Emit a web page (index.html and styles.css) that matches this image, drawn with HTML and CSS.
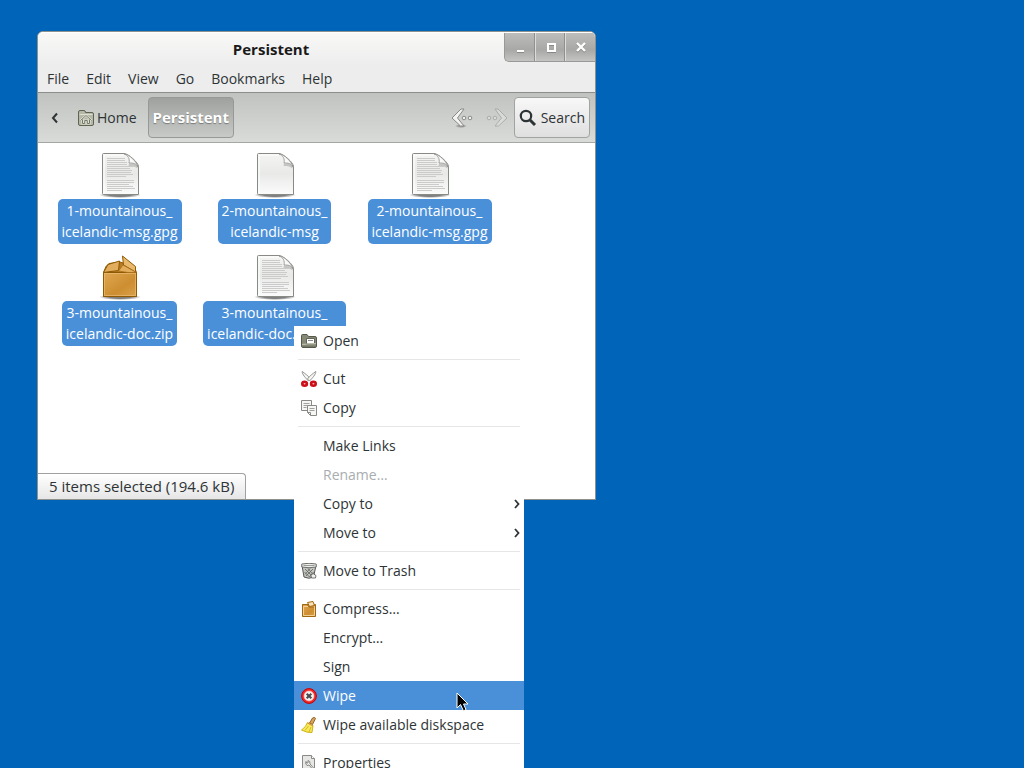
FILE: index.html
```html
<!DOCTYPE html>
<html lang="en">
<head>
    <meta charset="UTF-8">
    <meta name="viewport" content="width=device-width, initial-scale=1.0">
    <title>Persistent</title>
    <link rel="stylesheet" href="styles.css">
</head>
<body>
    <!-- Shared icon shapes -->
    <svg class="icon-defs" width="0" height="0" aria-hidden="true">
        <defs>
            <linearGradient id="paper" x1="0" y1="0" x2="0" y2="1">
                <stop offset="0" stop-color="#f4f4f3"/>
                <stop offset="0.5" stop-color="#e9eae8"/>
                <stop offset="1" stop-color="#fbfbfb"/>
            </linearGradient>
            <radialGradient id="shade">
                <stop offset="0.5" stop-color="#000" stop-opacity="0.5"/>
                <stop offset="1" stop-color="#000" stop-opacity="0"/>
            </radialGradient>
            <linearGradient id="carton" x1="0" y1="0" x2="1" y2="1">
                <stop offset="0" stop-color="#e0a751"/>
                <stop offset="0.6" stop-color="#cd8e31"/>
                <stop offset="1" stop-color="#d9a04a"/>
            </linearGradient>
            <linearGradient id="folder" x1="0" y1="0" x2="0" y2="1">
                <stop offset="0" stop-color="#a5a892"/>
                <stop offset="1" stop-color="#6c6f5f"/>
            </linearGradient>
            <symbol id="page" viewBox="0 0 48 48">
                <ellipse cx="24" cy="44" rx="21" ry="3" fill="url(#shade)"/>
                <path d="M7.500 2.500H28c4 0 14.500 9 14.500 13V43.500H7.500Q6.500 43.500 6.500 42.500V3.500Q6.500 2.500 7.500 2.500Z" fill="url(#paper)" stroke="#888a85"/>
                <path d="M8 42V4H28" fill="none" stroke="#fff"/>
                <path d="M28 3c4 1 6 5 5 9 4 0 7 0 9 4-1-5-9-13-14-13Z" fill="#fafafa" stroke="#8e908c" stroke-width="0.800"/>
                <path d="M33 12.500c3 0 6 0 8.500 2v3c-3-2.500-7-2.500-9-2.500Z" fill="#888a85" opacity="0.400"/>
            </symbol>
            <symbol id="text-page" viewBox="0 0 48 48">
                <use href="#page"/>
                <path d="M11 7.500h18M11 9.500h18M11 11.500h20M11 13.500h20M11 15.500h27M11 17.500h23M11 19.500h25M11 21.500h24M11 23.500h26M11 25.500h19M11 29.500h27M11 31.500h27M11 33.500h22M11 35.500h26M11 37.500h28M11 39.500h15" stroke="#cbccca"/>
            </symbol>
        </defs>
    </svg>

    <main class="desktop">
        <section class="window">
            <header class="titlebar">
                <h1 class="window-title">Persistent</h1>
                <div class="window-controls">
                    <button type="button" aria-label="Minimize">
                        <svg width="12" height="12" viewBox="0 0 12 12"><path d="M3 10h7" stroke="#fff" stroke-width="2"/></svg>
                    </button>
                    <button type="button" aria-label="Maximize">
                        <svg width="12" height="12" viewBox="0 0 12 12"><path d="M3 3h7v7H3z" fill="none" stroke="#fff" stroke-width="2"/></svg>
                    </button>
                    <button type="button" aria-label="Close">
                        <svg width="12" height="12" viewBox="0 0 12 12"><path d="M2 2l8 8M10 2l-8 8" stroke="#fff" stroke-width="2.400"/></svg>
                    </button>
                </div>
            </header>

            <nav class="menubar">
                <button type="button">File</button>
                <button type="button">Edit</button>
                <button type="button">View</button>
                <button type="button">Go</button>
                <button type="button">Bookmarks</button>
                <button type="button">Help</button>
            </nav>

            <div class="toolbar">
                <button type="button" class="path-scroll" aria-label="Scroll path">
                    <svg width="10" height="12" viewBox="0 0 10 12"><path d="M7 1.500L3 6l4 4.500" fill="none" stroke="#2e3436" stroke-width="2"/></svg>
                </button>
                <button type="button" class="path-button">
                    <svg width="16" height="16" viewBox="0 0 16 16">
                        <path d="M.5 14V2Q.5 .5 2 .5h4Q7.500 .5 7.500 2.500H14Q15.500 2.500 15.500 4v10Q15.500 15.500 14 15.500H2Q.5 15.500 .5 14Z" fill="#b5b8a5" stroke="#5f6354"/>
                        <path d="M1.500 4.500h13" stroke="#dddfd2"/>
                        <path d="M2.500 10.500L8 5.500l5.500 5M4.500 9.500v4h2.200v-3h2.600v3h2.200v-4" fill="none" stroke="#e6e8dc" stroke-width="2"/>
                        <path d="M2.500 10.500L8 5.500l5.500 5M4.500 9.500v4h2.200v-3h2.600v3h2.200v-4" fill="none" stroke="#74786a"/>
                    </svg>
                    Home
                </button>
                <button type="button" class="path-button path-current">Persistent</button>

                <div class="history">
                    <button type="button" aria-label="Back">
                        <svg width="24" height="24" viewBox="0 0 24 24">
                            <ellipse cx="11" cy="20" rx="6" ry="2" fill="url(#shade)" opacity="0.500"/>
                            <path d="M11 3h3L7.500 12l6.500 8h-3.500L2 12Z" fill="#f2f2f1" stroke="#888a85"/>
                            <circle cx="14" cy="12" r="1.800" fill="#f2f2f1" stroke="#888a85"/>
                            <circle cx="20" cy="12" r="1.800" fill="#f2f2f1" stroke="#888a85"/>
                        </svg>
                    </button>
                    <button type="button" aria-label="Forward" disabled>
                        <svg width="24" height="24" viewBox="0 0 24 24">
                            <path d="M13 3h-3l6.500 9-6.500 8h3.500L22 12Z" fill="#e6e7e5" stroke="#888a85"/>
                            <circle cx="10" cy="12" r="1.800" fill="#e6e7e5" stroke="#888a85"/>
                            <circle cx="4" cy="12" r="1.800" fill="#e6e7e5" stroke="#888a85"/>
                        </svg>
                    </button>
                </div>

                <button type="button" class="search-button">
                    <svg width="18" height="18" viewBox="0 0 18 18">
                        <circle cx="7" cy="7" r="5.200" fill="none" stroke="#2e3436" stroke-width="2.200"/>
                        <path d="M11 11l5 5" stroke="#2e3436" stroke-width="3"/>
                    </svg>
                    Search
                </button>
            </div>

            <ul class="files">
                <li class="file">
                    <svg width="48" height="48"><use href="#text-page"/></svg>
                    <span class="file-name">1-mountainous_<br>icelandic-msg.gpg</span>
                </li>
                <li class="file">
                    <svg width="48" height="48"><use href="#page"/></svg>
                    <span class="file-name">2-mountainous_<br>icelandic-msg</span>
                </li>
                <li class="file">
                    <svg width="48" height="48"><use href="#text-page"/></svg>
                    <span class="file-name">2-mountainous_<br>icelandic-msg.gpg</span>
                </li>
                <li class="file">
                    <svg width="48" height="48" viewBox="0 0 48 48">
                        <ellipse cx="24" cy="44" rx="21" ry="3" fill="url(#shade)"/>
                        <path d="M7.500 19.500L10 13.500L13 10.500L24 9L38 13.500L40.500 19.500V43.500H7.500Z" fill="#b57b27" stroke="#8f5902"/>
                        <path d="M7.500 19.500h33v24h-33Z" fill="url(#carton)" stroke="#8f5902"/>
                        <path d="M8.500 42.500v-22h31v22Z" fill="none" stroke="#eec27e" opacity="0.600"/>
                        <path d="M7.500 19.500l4.500-8L23.500 8l-1 9.500Z" fill="#e2ad5c" stroke="#8f5902"/>
                        <path d="M26.500 3L39.500 13.500V19L27.500 12Z" fill="#e9b96e" stroke="#8f5902"/>
                        <path d="M27 12L40.500 19.500H32L22.500 18Z" fill="#e2ad5c" stroke="#a66a10" stroke-width="0.700"/>
                    </svg>
                    <span class="file-name">3-mountainous_<br>icelandic-doc.zip</span>
                </li>
                <li class="file">
                    <svg width="48" height="48"><use href="#text-page"/></svg>
                    <span class="file-name">3-mountainous_<br>icelandic-doc.zip.gpg</span>
                </li>
            </ul>

            <footer class="statusbar">5 items selected (194.6 kB)</footer>
        </section>

        <div class="context-menu" role="menu">
            <button type="button" role="menuitem">
                <svg width="16" height="16" viewBox="0 0 16 16">
                    <path d="M.5 13V2.500Q.5 1.500 1.500 1.500H6l1.500 2H14q1.500 0 1.500 1.500v8q0 1.500-1.500 1.500H2Q.5 14.500.5 13Z" fill="#858975" stroke="#56594a"/>
                    <path d="M1.500 10.500h13v3.500h-13Z" fill="url(#folder)"/>
                    <path d="M5.500 5.500h8v5h-8Z" fill="#fff" stroke="#62655a"/>
                    <path d="M7 7.500h5" stroke="#888a85"/>
                    <path d="M1 11.500h4l1-1h9" fill="none" stroke="#b9bcaa"/>
                </svg>
                <span>Open</span>
            </button>
            <hr>
            <button type="button" role="menuitem">
                <svg width="16" height="16" viewBox="0 0 16 16">
                    <path d="M1.200 .5C.8 3 5 7.500 7.500 10L9.500 8C7.500 5 4 2.500 1.200 .5Z" fill="#f6f6f5" stroke="#888a85" stroke-width="0.900"/>
                    <path d="M14.800 .5C15.200 3 11 7.500 8.500 10L6.500 8C8.500 5 12 2.500 14.800 .5Z" fill="#f6f6f5" stroke="#888a85" stroke-width="0.900"/>
                    <ellipse cx="3.600" cy="12.700" rx="2.300" ry="2" fill="#fbb" stroke="#cc0f18" stroke-width="2.600"/>
                    <ellipse cx="12.400" cy="12.700" rx="2.300" ry="2" fill="#fbb" stroke="#cc0f18" stroke-width="2.600"/>
                </svg>
                <span>Cut</span>
            </button>
            <button type="button" role="menuitem">
                <svg width="16" height="16" viewBox="0 0 16 16">
                    <path d="M.5.5h10v10H.5Z" fill="#f6f6f5" stroke="#888a85"/>
                    <path d="M2.500 3.500h6M2.500 5.500h5M2.500 7.500h3" stroke="#9fa19c"/>
                    <path d="M6.500 5.500h9v10h-6l-3-3Z" fill="#f6f6f5" stroke="#888a85"/>
                    <path d="M8.500 8.500h5M8.500 10.500h5" stroke="#9fa19c"/>
                    <path d="M6.500 12.500h3v3" fill="none" stroke="#888a85"/>
                </svg>
                <span>Copy</span>
            </button>
            <hr>
            <button type="button" role="menuitem"><span>Make Links</span></button>
            <button type="button" role="menuitem" disabled><span>Rename…</span></button>
            <button type="button" role="menuitem" class="has-submenu">
                <span>Copy to</span>
                <svg width="6" height="10" viewBox="0 0 6 10"><path d="M1 1l3.500 4L1 9" fill="none" stroke="#2e3436" stroke-width="1.800"/></svg>
            </button>
            <button type="button" role="menuitem" class="has-submenu">
                <span>Move to</span>
                <svg width="6" height="10" viewBox="0 0 6 10"><path d="M1 1l3.500 4L1 9" fill="none" stroke="#2e3436" stroke-width="1.800"/></svg>
            </button>
            <hr>
            <button type="button" role="menuitem">
                <svg width="16" height="16" viewBox="0 0 16 16">
                    <path d="M1 2.500L3 14q5 2.500 9.500 0L15 2.500Z" fill="#c4c6c2" stroke="#555753"/>
                    <path d="M4 6l7 7M7 5.500l5 6M3.500 9l5 5M12 6l-7 7M9 5.500l-5 6M12.500 9l-4 5" stroke="#60625e" stroke-width="0.800"/>
                    <path d="M.8 1Q8-.5 15.200 1v3Q8 5.500 .8 4Z" fill="#eeeeec" stroke="#6c6e6a"/>
                    <path d="M2.500 2.500h11" stroke="#9a9c98"/>
                    <path d="M10 12.500l2-2 3 2-.5 2.500h-4Z" fill="#eeeeec" stroke="#555753" stroke-width="0.800"/>
                </svg>
                <span>Move to Trash</span>
            </button>
            <hr>
            <button type="button" role="menuitem">
                <svg width="16" height="16" viewBox="0 0 16 16">
                    <path d="M1.500 3.500h13v12h-13Z" fill="url(#carton)" stroke="#a0670e"/>
                    <path d="M2.500 14.500v-9h11v9Z" fill="none" stroke="#f0cf98"/>
                    <path d="M1.500 3.500h5l1.500 2.500h5" fill="none" stroke="#a0670e"/>
                    <path d="M6.500 1.500l5.500-1 1.500 4-5 1Z" fill="#f8e2bc" stroke="#a0670e"/>
                </svg>
                <span>Compress…</span>
            </button>
            <button type="button" role="menuitem"><span>Encrypt…</span></button>
            <button type="button" role="menuitem"><span>Sign</span></button>
            <button type="button" role="menuitem" class="active">
                <svg width="16" height="16" viewBox="0 0 16 16">
                    <circle cx="8" cy="8" r="7.400" fill="#ef2929" stroke="#c80000"/>
                    <circle cx="8" cy="8" r="5" fill="#f3f3f2" stroke="#fbb" stroke-width="0.600"/>
                    <path d="M5.700 5.700l4.600 4.600M10.300 5.700l-4.600 4.600" stroke="#45484a" stroke-width="2"/>
                </svg>
                <span>Wipe</span>
            </button>
            <button type="button" role="menuitem">
                <svg width="16" height="16" viewBox="0 0 16 16">
                    <path d="M8.500 6L11.500 1q2.500-1.500 3 .5L11.500 7.500Z" fill="#d9a35c" stroke="#7a4a0c" stroke-width="0.800"/>
                    <path d="M6.500 5.500l5.500 3-1 7q-5 .5-10.500-2.500Q5 10 6.500 5.500Z" fill="#f7e95c" stroke="#c9ac00" stroke-width="0.900"/>
                    <path d="M7.500 9L4 13.500M10 10L8 15" stroke="#d0b010" stroke-width="0.800"/>
                    <path d="M6.500 6l5.500 3" stroke="#d98a4a"/>
                </svg>
                <span>Wipe available diskspace</span>
            </button>
            <hr>
            <button type="button" role="menuitem">
                <svg width="16" height="16" viewBox="0 0 16 16">
                    <path d="M1.500.5h9l3 3v12h-12Z" fill="#e6e7e5" stroke="#888a85"/>
                    <path d="M10.500.5v3h3" fill="#fff" stroke="#888a85"/>
                    <path d="M5 6.500Q4 9 6 10.500L8 10l4 4.500 1-1-4-4.500Q9.500 6 7 5.500V8H5.500Z" fill="#f6f6f5" stroke="#777a75" stroke-width="0.900"/>
                </svg>
                <span>Properties</span>
            </button>
        </div>

        <svg class="pointer" width="13" height="20" viewBox="0 0 13 20" aria-hidden="true">
            <path d="M1 1v15l3.500-3.500L7.500 19l2.500-1.500-2.500-5.500H12Z" fill="#000" stroke="#fff"/>
        </svg>
    </main>
</body>
</html>
```
FILE: styles.css
```css
* {
    margin: 0;
    padding: 0;
    box-sizing: border-box;
}

body {
    font-family: 'Open Sans', 'Noto Sans', sans-serif;
    font-size: 14px;
    line-height: 21px;
    color: #2e3436;
    background: #0064b9;
}

button {
    font: inherit;
    color: inherit;
    background: none;
    border: none;
}

svg {
    display: block;
    flex: none;
}

.icon-defs {
    position: absolute;
}

.desktop {
    position: relative;
    height: 100vh;
    padding: 31px 37px;
    overflow: hidden;
}

/* File manager window */
.window {
    display: flex;
    flex-direction: column;
    width: 100%;
    max-width: 559px;
    background: #fff;
    border: 1px solid #8f918d;
    border-radius: 6px 6px 0 0;
    overflow: hidden;
}

.titlebar {
    display: flex;
    align-items: flex-start;
    height: 34px;
    background: linear-gradient(#f8f8f7, #ededed);
    border-top: 1px solid #fff;
}

.window-title {
    flex: 1;
    font-size: 15px;
    font-weight: bold;
    line-height: 32px;
    text-align: center;
    color: #1a1a1a;
}

.window-controls {
    display: flex;
    height: 29px;
    background: linear-gradient(#bdbdbb, #a8a8a6 60%, #c4c4c2);
    border: 1px solid #999;
    border-width: 0 0 1px 1px;
    border-radius: 0 0 0 5px;
}

.window-controls button {
    display: flex;
    align-items: center;
    justify-content: center;
    width: 30px;
}

.window-controls svg {
    filter: drop-shadow(0 1px 0 #888);
}

.window-controls button + button {
    border-left: 1px solid #dcdcda;
    box-shadow: -1px 0 0 #8f918d;
}

.menubar {
    display: flex;
    gap: 17px;
    height: 26px;
    padding: 0 9px;
    background: #ededed;
}

.menubar button {
    height: 24px;
}

.toolbar {
    display: flex;
    align-items: center;
    height: 51px;
    padding: 0 5px;
    background: linear-gradient(#c0c3bf, #d9dbd8);
    border-top: 1px solid #8b8e8a;
    border-bottom: 1px solid #a4a8a3;
}

.path-scroll {
    padding: 0 7px;
}

.path-button,
.search-button {
    display: flex;
    align-items: center;
    height: 41px;
    padding: 0 4px;
}

.path-button {
    gap: 3px;
    margin-left: 7px;
}

.path-current {
    font-size: 15px;
    font-weight: bold;
    color: #fff;
    text-shadow: 0 1px 1px #777;
    background: linear-gradient(#9ea19d, #c8cac7);
    border: 1px solid #969995;
    border-radius: 4px;
}

.history {
    display: flex;
    gap: 11px;
    margin: 0 5px 0 auto;
}

.history button:disabled {
    opacity: 0.5;
}

.search-button {
    gap: 4px;
    background: linear-gradient(#f8f8f8, #dfdfdf);
    border: 1px solid #a0a39f;
    border-radius: 4px;
}

.files {
    display: grid;
    grid-template-columns: repeat(auto-fill, 155px);
    align-content: start;
    row-gap: 9px;
    min-height: 330px;
    padding: 8px 4px;
    list-style: none;
}

.file {
    display: flex;
    flex-direction: column;
    align-items: center;
}

.file-name {
    padding: 1px 4px 2px;
    text-align: center;
    color: #fff;
    background: #4a90d9;
    border-radius: 5px;
}

.statusbar {
    align-self: flex-start;
    padding: 2px 11px;
    font-size: 15px;
    background: linear-gradient(#fff, #e6e6e6);
    border: 1px solid #a1a19f;
    border-width: 1px 1px 0 0;
    border-radius: 0 4px 0 0;
}

/* Context menu */
.context-menu {
    position: absolute;
    top: 326px;
    left: 294px;
    width: 230px;
    background: #fff;
}

.context-menu button {
    display: flex;
    align-items: center;
    gap: 6px;
    width: 100%;
    height: 29px;
    padding: 0 4px 0 7px;
    text-align: left;
}

.context-menu span:first-child {
    padding-left: 22px;
}

.context-menu button:disabled {
    color: #a8adb0;
}

.context-menu .has-submenu {
    justify-content: space-between;
}

.context-menu .active {
    color: #fff;
    background: #4a90d9;
}

.context-menu hr {
    margin: 4px;
    border: none;
    border-top: 1px solid #e6e6e6;
}

.pointer {
    position: absolute;
    top: 692px;
    left: 456px;
}
```
